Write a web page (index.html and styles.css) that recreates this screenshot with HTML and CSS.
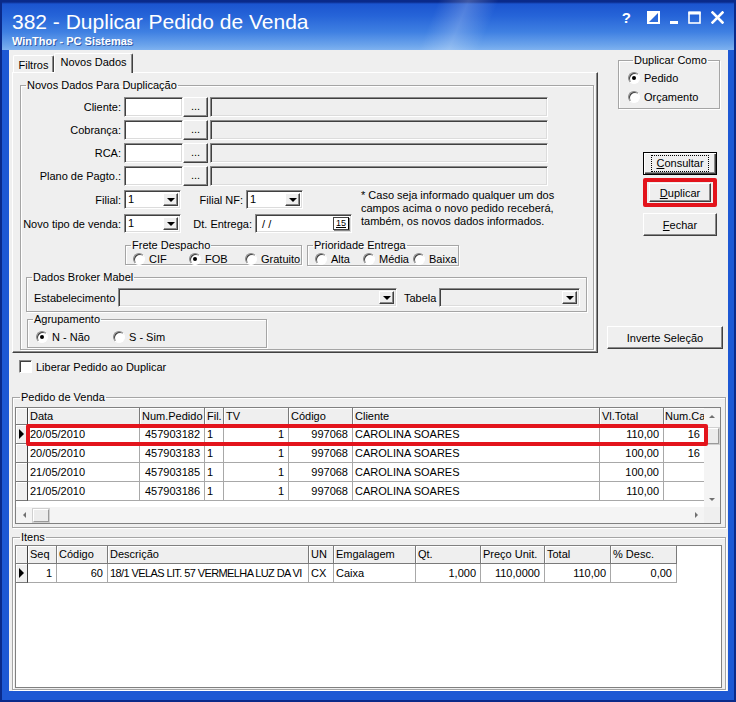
FILE: index.html
```html
<!DOCTYPE html>
<html lang="pt-BR">
<head>
<meta charset="utf-8">
<title>382 - Duplicar Pedido de Venda</title>
<link rel="stylesheet" href="styles.css">
</head>
<body>
<div class="window">
  <div class="titlebar">
    <div class="title-text">
      <div class="title">382 - Duplicar Pedido de Venda</div>
      <div class="subtitle">WinThor - PC Sistemas</div>
    </div>
    <div class="caption-btns">
      <span class="cap-help">?</span>
      <svg class="cap-ico" width="13" height="13" viewBox="0 0 13 13"><rect x="1" y="1" width="11" height="11" fill="none" stroke="#fff" stroke-width="2"/><polygon points="1,12 12,1 1,1" fill="#fff"/></svg>
      <svg class="cap-ico" width="8" height="13" viewBox="0 0 8 13"><rect x="0" y="10" width="8" height="3" fill="#fff"/></svg>
      <svg class="cap-ico" width="13" height="13" viewBox="0 0 13 13"><rect x="1" y="1.5" width="11" height="10.5" fill="none" stroke="#fff" stroke-width="1.6"/><rect x="0.5" y="0.5" width="12" height="3" fill="#fff"/></svg>
      <svg class="cap-ico" width="13" height="13" viewBox="0 0 13 13"><path d="M1.5 1.5 L11.5 11.5 M11.5 1.5 L1.5 11.5" stroke="#fff" stroke-width="2.6" stroke-linecap="square"/></svg>
    </div>
  </div>
  <div class="frame">
    <div class="client">
      <div class="top">
        <div class="tabs-col">
          <div class="tab-strip">
            <div class="tab">Filtros</div>
            <div class="tab active">Novos Dados</div>
          </div>
          <div class="tab-page">
            <fieldset class="gb gb-main">
              <legend>Novos Dados Para Duplicação</legend>
              <div class="frow"><span class="lbl">Cliente:</span><span class="edit e-code"></span><span class="btn btn-dots">...</span><span class="edit e-desc"></span></div>
              <div class="frow"><span class="lbl">Cobrança:</span><span class="edit e-code"></span><span class="btn btn-dots">...</span><span class="edit e-desc"></span></div>
              <div class="frow"><span class="lbl">RCA:</span><span class="edit e-code"></span><span class="btn btn-dots">...</span><span class="edit e-desc"></span></div>
              <div class="frow"><span class="lbl">Plano de Pagto.:</span><span class="edit e-code"></span><span class="btn btn-dots">...</span><span class="edit e-desc"></span></div>
              <div class="frow2">
                <div class="rows2">
                  <div class="srow srow1">
                    <span class="lbl">Filial:</span>
                    <span class="combo c-small"><span class="val">1</span><span class="dd"></span></span>
                    <span class="lbl lbl-fnf">Filial NF:</span>
                    <span class="combo c-small"><span class="val">1</span><span class="dd"></span></span>
                  </div>
                  <div class="srow srow2">
                    <span class="lbl">Novo tipo de venda:</span>
                    <span class="combo c-small"><span class="val">1</span><span class="dd"></span></span>
                    <span class="lbl lbl-dt">Dt. Entrega:</span>
                    <span class="edit e-date"><span class="val">&nbsp;/ /</span><span class="cal">15</span></span>
                  </div>
                </div>
                <div class="note">* Caso seja informado qualquer um dos<br>campos acima o novo pedido receberá,<br>também, os novos dados informados.</div>
              </div>
              <div class="rgroups">
                <fieldset class="gb gb-frete">
                  <legend>Frete Despacho</legend>
                  <div class="radios">
                    <span class="opt o-cif"><span class="radio"></span>CIF</span>
                    <span class="opt o-fob"><span class="radio on"></span>FOB</span>
                    <span class="opt"><span class="radio"></span>Gratuito</span>
                  </div>
                </fieldset>
                <fieldset class="gb gb-prio">
                  <legend>Prioridade Entrega</legend>
                  <div class="radios">
                    <span class="opt o-alta"><span class="radio"></span>Alta</span>
                    <span class="opt o-media"><span class="radio"></span>Média</span>
                    <span class="opt"><span class="radio"></span>Baixa</span>
                  </div>
                </fieldset>
              </div>
              <fieldset class="gb gb-broker">
                <legend>Dados Broker Mabel</legend>
                <div class="broker-row">
                  <span class="lbl-est">Estabelecimento</span>
                  <span class="combo c-est dis"><span class="val"></span><span class="dd"></span></span>
                  <span class="lbl-tab">Tabela</span>
                  <span class="combo c-tab dis"><span class="val"></span><span class="dd"></span></span>
                </div>
              </fieldset>
              <fieldset class="gb gb-agrup">
                <legend>Agrupamento</legend>
                <div class="radios">
                  <span class="opt o-nao"><span class="radio on"></span>N - Não</span>
                  <span class="opt"><span class="radio"></span>S - Sim</span>
                </div>
              </fieldset>
            </fieldset>
          </div>
        </div>
        <div class="side">
          <fieldset class="gb gb-dup">
            <legend>Duplicar Como</legend>
            <div class="vopt"><span class="radio on"></span>Pedido</div>
            <div class="vopt"><span class="radio"></span>Orçamento</div>
          </fieldset>
          <div class="btn btn-cmd btn-default b-consultar"><span class="focus"><u>C</u>onsultar</span></div>
          <div class="hl-btn"><div class="btn btn-cmd b-dup"><u>D</u>uplicar</div></div>
          <div class="btn btn-cmd b-fechar"><u>F</u>echar</div>
          <div class="btn btn-cmd b-inverte">Inverte Seleção</div>
        </div>
      </div>
      <div class="chk-row"><span class="chk"></span>Liberar Pedido ao Duplicar</div>
      <fieldset class="gb gb-pedido">
        <legend>Pedido de Venda</legend>
        <div class="grid g1">
          <div class="g-main">
            <div class="g-table">
              <div class="trow thead">
                <span class="c ind"></span><span class="c">Data</span><span class="c">Num.Pedido</span><span class="c">Fil.</span><span class="c">TV</span><span class="c">Código</span><span class="c">Cliente</span><span class="c">Vl.Total</span><span class="c c-last">Num.Ca</span>
              </div>
              <div class="trow">
                <span class="c ind cur"></span><span class="c">20/05/2010</span><span class="c r">457903182</span><span class="c">1</span><span class="c r">1</span><span class="c r">997068</span><span class="c">CAROLINA SOARES</span><span class="c r">110,00</span><span class="c r c-last">16</span>
              </div>
              <div class="trow">
                <span class="c ind"></span><span class="c">20/05/2010</span><span class="c r">457903183</span><span class="c">1</span><span class="c r">1</span><span class="c r">997068</span><span class="c">CAROLINA SOARES</span><span class="c r">100,00</span><span class="c r c-last">16</span>
              </div>
              <div class="trow">
                <span class="c ind"></span><span class="c">21/05/2010</span><span class="c r">457903185</span><span class="c">1</span><span class="c r">1</span><span class="c r">997068</span><span class="c">CAROLINA SOARES</span><span class="c r">100,00</span><span class="c r c-last"></span>
              </div>
              <div class="trow">
                <span class="c ind"></span><span class="c">21/05/2010</span><span class="c r">457903186</span><span class="c">1</span><span class="c r">1</span><span class="c r">997068</span><span class="c">CAROLINA SOARES</span><span class="c r">110,00</span><span class="c r c-last"></span>
              </div>
            </div>
            <div class="vscroll">
              <span class="sb-btn"><span class="ar ar-up"></span></span>
              <span class="thumb v-thumb"></span>
              <span class="sb-fill"></span>
              <span class="sb-btn"><span class="ar ar-down"></span></span>
            </div>
          </div>
          <div class="g-hrow">
            <div class="hscroll">
              <span class="sb-btn"><span class="ar ar-left"></span></span>
              <span class="thumb h-thumb"></span>
              <span class="sb-fill"></span>
              <span class="sb-btn"><span class="ar ar-right"></span></span>
            </div>
            <span class="corner"></span>
          </div>
          <div class="row-hl"></div>
        </div>
      </fieldset>
      <fieldset class="gb gb-itens">
        <legend>Itens</legend>
        <div class="grid g2">
          <div class="trow thead">
            <span class="c ind"></span><span class="c">Seq</span><span class="c">Código</span><span class="c">Descrição</span><span class="c">UN</span><span class="c">Emgalagem</span><span class="c">Qt.</span><span class="c">Preço Unit.</span><span class="c">Total</span><span class="c">% Desc.</span>
          </div>
          <div class="trow">
            <span class="c ind cur"></span><span class="c r">1</span><span class="c r">60</span><span class="c desc">18/1 VELAS LIT. 57 VERMELHA LUZ DA VI</span><span class="c">CX</span><span class="c">Caixa</span><span class="c r">1,000</span><span class="c r">110,0000</span><span class="c r">110,00</span><span class="c r">0,00</span>
          </div>
        </div>
      </fieldset>
    </div>
  </div>
</div>
</body>
</html>
```

FILE: styles.css
```css
* { box-sizing: border-box; }
html, body { margin: 0; padding: 0; }
body {
  font-family: "Liberation Sans", Arial, sans-serif;
  font-size: 11px;
  color: #000;
  background: #fff;
}

.window {
  width: 736px;
  height: 702px;
  display: flex;
  flex-direction: column;
  background: #1d58d4;
}

/* ---------- title bar ---------- */
.titlebar {
  height: 50px;
  flex: none;
  display: flex;
  justify-content: space-between;
  padding: 0 12px 0 12px;
  background:
    linear-gradient(112deg, rgba(255,255,255,0) 58%, rgba(255,255,255,0.22) 62%, rgba(255,255,255,0) 66%),
    linear-gradient(180deg, #0a2a8a 0px, #0a2a8a 2px, #1b55d0 4px, #2664d8 16px, #3f80e2 32px, #6ea6ec 46px, #7fb2f0 50px);
  box-shadow: inset 2px 0 0 #0a2a8a, inset -2px 0 0 #0a2a8a;
}
.title {
  margin-top: 10px;
  font-size: 21px;
  line-height: 24px;
  color: #fff;
  white-space: nowrap;
}
.subtitle {
  margin-top: 1px;
  font-size: 11px;
  line-height: 13px;
  font-weight: bold;
  color: #fff;
  text-shadow: 1px 1px 0 rgba(10, 40, 120, 0.6);
  white-space: nowrap;
}
.caption-btns {
  display: flex;
  align-items: flex-start;
  margin-top: 11px;
  gap: 10px;
}
.cap-help {
  font-weight: bold;
  font-size: 15px;
  line-height: 14px;
  color: #fff;
  margin-right: 6px;
}
.cap-ico { display: block; }

/* ---------- frame / client ---------- */
.frame {
  flex: 1;
  padding: 0 8px 11px 9px;
  background: #1d58d4;
  box-shadow: inset 2px 0 0 #0a2a8a, inset -2px 0 0 #0a2a8a, inset 0 -2px 0 #0a2a8a;
  display: flex;
}
.client {
  flex: 1;
  background: #efefef;
  display: flex;
  flex-direction: column;
}

/* ---------- generic controls ---------- */
.gb {
  margin: 0;
  padding: 0;
  min-width: 0;
  border: 1px solid #a5a5a5;
  box-shadow: 1px 1px 0 #fff, inset 1px 1px 0 #fff;
}
.gb > legend {
  padding: 0 1px;
  margin-left: 5px;
  line-height: 13px;
  height: 13px;
  font-size: 11px;
}

.edit {
  display: inline-flex;
  align-items: center;
  background: #fff;
  border-top: 1px solid #8a8a8a;
  border-left: 1px solid #8a8a8a;
  border-bottom: 1px solid #fff;
  border-right: 1px solid #fff;
  box-shadow: inset 1px 1px 0 #404040, inset -1px -1px 0 #dcdcdc;
}

.btn {
  display: flex;
  align-items: center;
  justify-content: center;
  background: #efefef;
  border: 1px solid;
  border-color: #fff #404040 #404040 #fff;
  box-shadow: inset -1px -1px 0 #8a8a8a;
  white-space: nowrap;
}

.lbl {
  width: 103px;
  padding-right: 3px;
  text-align: right;
  white-space: nowrap;
  flex: none;
}

.combo {
  display: inline-flex;
  align-items: stretch;
  background: #fff;
  border-top: 1px solid #8a8a8a;
  border-left: 1px solid #8a8a8a;
  border-bottom: 1px solid #fff;
  border-right: 1px solid #fff;
  box-shadow: inset 1px 1px 0 #404040, inset -1px -1px 0 #dcdcdc;
  padding: 2px 2px 2px 2px;
  height: 19px;
  flex: none;
}
.combo .val { flex: 1; padding-left: 1px; line-height: 13px; }
.combo .dd {
  width: 15px;
  background: #efefef;
  border: 1px solid;
  border-color: #fff #404040 #404040 #fff;
  box-shadow: inset -1px -1px 0 #8a8a8a;
  position: relative;
}
.combo .dd::after {
  content: "";
  position: absolute;
  left: 3px;
  top: 4px;
  border-left: 4px solid transparent;
  border-right: 4px solid transparent;
  border-top: 4px solid #000;
}
.combo.dis { background: #efefef; }

.radio {
  display: inline-block;
  width: 12px;
  height: 12px;
  border-radius: 50%;
  background: #fff;
  border: 1px solid;
  border-color: #8a8a8a #fff #fff #8a8a8a;
  box-shadow: inset 1px 1px 0 #404040;
  position: relative;
  flex: none;
  margin-right: 4px;
}
.radio.on::after {
  content: "";
  position: absolute;
  left: 3px;
  top: 3px;
  width: 4px;
  height: 4px;
  border-radius: 50%;
  background: #000;
}
.radios { display: flex; align-items: center; height: 13px; }
.opt { display: flex; align-items: center; white-space: nowrap; }

/* ---------- top area ---------- */
.top { display: flex; height: 303px; flex: none; }
.tabs-col { margin-left: 3px; width: 586px; flex: none; display: flex; flex-direction: column; }
.tab-strip { height: 22px; display: flex; align-items: flex-end; padding-left: 1px; }
.tab {
  height: 17px;
  width: 41px;
  border-top: 1px solid #fff;
  border-left: 1px solid #fff;
  border-right: 1px solid #404040;
  box-shadow: inset -1px 0 0 #8a8a8a;
  border-radius: 2px 2px 0 0;
  text-align: center;
  line-height: 16px;
  padding-top: 1px;
}
.tab.active {
  height: 20px;
  width: 79px;
  line-height: 17px;
  padding-top: 0;
  position: relative;
  top: 1px;
  background: #efefef;
}
.tab-page {
  height: 281px;
  border-top: 1px solid #fff;
  border-left: 1px solid #fff;
  border-right: 1px solid #404040;
  border-bottom: 1px solid #404040;
  box-shadow: inset -1px -1px 0 #8a8a8a;
}
.gb-main {
  margin: 6px 0 0 7px;
  width: 574px;
  height: 271px;
  padding-top: 5px;
}
.frow { display: flex; align-items: center; height: 20px; margin-bottom: 3px; }
.frow .edit { height: 20px; }
.e-code { width: 59px; }
.btn-dots { width: 25px; height: 20px; font-size: 11px; line-height: 10px; padding-bottom: 3px; }
.e-desc { width: 338px; margin-left: 2px; background: #efefef; }

.frow2 { display: flex; margin-top: 1px; }
.rows2 { width: 331px; flex: none; }
.srow { display: flex; align-items: center; height: 19px; }
.srow1 { margin-top: 1px; }
.srow2 { margin-top: 5px; }
.c-small { width: 57px; }
.lbl-fnf { width: 65px; }
.lbl-dt { width: 74px; }
.e-date { width: 97px; height: 19px; padding: 0 2px 0 3px; }
.e-date .val { flex: 1; }
.cal {
  width: 16px;
  height: 13px;
  border: 1px solid #444;
  border-right-color: #000;
  font-size: 9px;
  line-height: 11px;
  text-align: center;
  text-decoration: underline;
  background: #fff;
  box-shadow: 1px 1px 0 #888;
}
.note { margin-left: 9px; line-height: 13px; white-space: nowrap; }

.rgroups { display: flex; margin-top: 6px; }
.gb-frete { margin-left: 104px; width: 177px; height: 26px; }
.gb-prio { margin-left: 5px; width: 152px; height: 27px; }
.gb-frete .radios { padding-left: 7px; margin-top: 0; }
.o-cif { width: 56px; }
.o-fob { width: 56px; }
.gb-prio .radios { padding-left: 7px; }
.o-alta { width: 48px; }
.o-media { width: 50px; }

.gb-broker { margin: 5px 0 0 5px; width: 561px; height: 41px; }
.broker-row { display: flex; align-items: center; padding: 4px 0 0 7px; }
.lbl-est { width: 84px; white-space: nowrap; }
.c-est { width: 279px; }
.lbl-tab { margin-left: 7px; width: 35px; }
.c-tab { width: 141px; }

.gb-agrup { margin: 1px 0 0 6px; width: 240px; height: 35px; }
.gb-agrup .radios { padding: 4px 0 0 8px; height: 17px; }
.o-nao { width: 77px; }

/* ---------- side column ---------- */
.side { margin-left: 9px; width: 116px; display: flex; flex-direction: column; align-items: flex-start; }
.gb-dup { margin: 4px 0 0 11px; width: 102px; height: 55px; padding: 4px 0 0 9px; }
.vopt { display: flex; align-items: center; height: 13px; }
.vopt + .vopt { margin-top: 6px; }
.btn-cmd { width: 74px; height: 23px; margin-left: 36px; }
.b-consultar { margin-top: 43px; border: 1px solid #000; box-shadow: inset 1px 1px 0 #fff, inset -1px -1px 0 #404040, inset -2px -2px 0 #8a8a8a; }
.b-consultar .focus { border: 1px dotted #000; padding: 1px 4px; line-height: 13px; }
.hl-btn {
  margin: 3px 0 0 36px;
  width: 74px;
  height: 29px;
  border: 4px solid #e3141c;
  border-radius: 2px;
  padding: 1px 2px;
}
.hl-btn .b-dup { width: 62px; height: 19px; margin: 0 auto; }
.b-fechar { margin-top: 6px; }
.b-inverte { margin: 90px 0 0 0; width: 116px; }

/* ---------- checkbox ---------- */
.chk-row { display: flex; align-items: center; margin: 7px 0 0 10px; height: 13px; }
.chk {
  width: 13px;
  height: 13px;
  background: #fff;
  border: 1px solid;
  border-color: #8a8a8a #fff #fff #8a8a8a;
  box-shadow: inset 1px 1px 0 #404040;
  margin-right: 4px;
}

/* ---------- grids ---------- */
.gb-pedido { margin: 18px 0 0 3px; width: 714px; height: 137px; padding: 3px 3px 0 2px; }
.gb-itens { margin: 3px 0 0 3px; width: 714px; height: 159px; padding: 1px 2px 0 2px; }

.grid {
  background: #fff;
  border: 1px solid #808080;
  position: relative;
}
.g1 { width: 706px; height: 117px; display: flex; flex-direction: column; }
.g2 { width: 707px; height: 143px; }
.g-main { display: flex; height: 99px; }
.g-table { width: 688px; overflow: hidden; }
.trow { display: grid; }
.g1 .trow { grid-template-columns: 12px 112px 65px 19px 65px 64px 247px 64px 40px; width: 688px; }
.g2 .trow { grid-template-columns: 12px 29px 51px 201px 25px 82px 65px 64px 66px 66px; width: 661px; }
.c {
  height: 19px;
  line-height: 18px;
  padding: 0 2px;
  border-right: 1px solid #a8a8a8;
  border-bottom: 1px solid #a8a8a8;
  white-space: nowrap;
  overflow: hidden;
}
.c.r { text-align: right; padding-right: 4px; }
.c.c-last { border-right: 0; padding-left: 1px; }
.thead .c {
  height: 17px;
  line-height: 16px;
  background: #efefef;
  border-right-color: #7a7a7a;
  border-bottom-color: #7a7a7a;
  box-shadow: inset 1px 1px 0 #fff;
}
.g2 .thead .c { height: 18px; line-height: 17px; }
.c.ind {
  background: #efefef;
  border-right-color: #404040;
  border-bottom-color: #7a7a7a;
  box-shadow: inset 1px 1px 0 #fff;
  position: relative;
}
.c.cur::after {
  content: "";
  position: absolute;
  left: 3px;
  top: 4px;
  border-top: 5px solid transparent;
  border-bottom: 5px solid transparent;
  border-left: 5px solid #000;
}
.c.desc { letter-spacing: -0.6px; padding-left: 2px; padding-right: 0; }

.vscroll {
  width: 16px;
  background: #f4f4f4;
  display: flex;
  flex-direction: column;
  align-items: center;
}
.g-hrow { display: flex; height: 16px; }
.hscroll {
  width: 688px;
  background: #f4f4f4;
  display: flex;
  align-items: center;
}
.corner { width: 16px; background: #efefef; }
.sb-btn { width: 16px; height: 16px; display: flex; align-items: center; justify-content: center; flex: none; }
.sb-fill { flex: 1; }
.ar { width: 0; height: 0; }
.ar-up { border-left: 3px solid transparent; border-right: 3px solid transparent; border-bottom: 3px solid #707070; }
.ar-down { border-left: 3px solid transparent; border-right: 3px solid transparent; border-top: 3px solid #707070; }
.ar-left { border-top: 3px solid transparent; border-bottom: 3px solid transparent; border-right: 3px solid #707070; }
.ar-right { border-top: 3px solid transparent; border-bottom: 3px solid transparent; border-left: 3px solid #707070; }
.thumb {
  background: #ececec;
  border: 1px solid;
  border-color: #fff #9a9a9a #9a9a9a #fff;
  box-shadow: 0 0 0 1px #d0d0d0;
  flex: none;
}
.v-thumb { width: 12px; height: 16px; margin-top: 4px; margin-left: 2px; }
.h-thumb { width: 16px; height: 13px; margin-left: 1px; }

.row-hl {
  position: absolute;
  left: 10px;
  top: 16px;
  width: 682px;
  height: 22px;
  border: 4px solid #e3141c;
  border-radius: 2px;
  pointer-events: none;
}
```
